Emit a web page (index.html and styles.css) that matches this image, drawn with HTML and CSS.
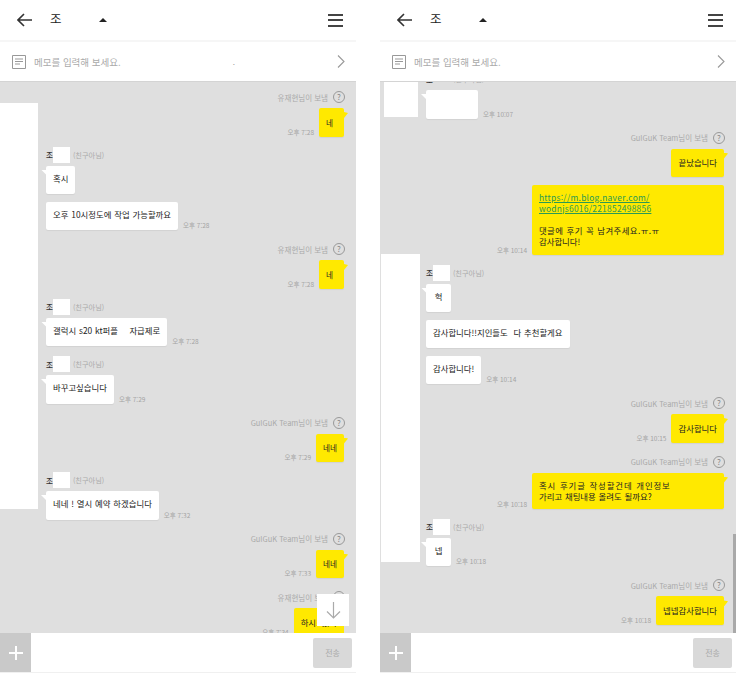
FILE: index.html
```html
<!DOCTYPE html>
<html lang="ko">
    <head>
        <meta charset="utf-8">
        <title>채팅</title>
        <link rel="stylesheet" href="styles.css">
    </head>
    <body>
        <div class="phone">
            <div class="header">
                <svg class="back" width="15" height="14" viewBox="0 0 15 14"><path d="M7 1 1 7l6 6M1 7h14"/></svg>
                <span class="title">조</span>
                <span class="caret"></span>
                <div class="burger"><i></i><i></i><i></i></div>
            </div>
            <div class="memo">
                <svg class="memo-icon" width="14" height="14" viewBox="0 0 14 14"><path d="M.5.5h13v13H.5zM3 4h8M3 6.5h8M3 9h5"/></svg>
                <span class="memo-text">메모를 입력해 보세요.</span>
                <span class="memo-dot">.</span>
                <svg class="chevron" width="8" height="13" viewBox="0 0 8 13"><path d="m1 .5 6 6-6 6"/></svg>
            </div>
            <div class="chat">
                <div class="sender">유재현님이 보냄 <span class="help">?</span></div>
                <div class="row out"><span class="time">오후 7:28</span><div class="bubble tail short">네</div></div>

                <div class="name">조<span class="mask"></span><em>(친구아님)</em></div>
                <div class="row"><div class="bubble tail">혹시</div></div>
                <div class="row next"><div class="bubble">오후 10시정도에 작업 가능할까요</div><span class="time">오후 7:28</span></div>

                <div class="sender">유재현님이 보냄 <span class="help">?</span></div>
                <div class="row out"><span class="time">오후 7:28</span><div class="bubble tail short">네</div></div>

                <div class="name">조<span class="mask"></span><em>(친구아님)</em></div>
                <div class="row"><div class="bubble tail">갤럭시 s20 kt퍼플&nbsp;&nbsp;&nbsp; 자급제로</div><span class="time">오후 7:28</span></div>

                <div class="name">조<span class="mask"></span><em>(친구아님)</em></div>
                <div class="row"><div class="bubble tail">바꾸고싶습니다</div><span class="time">오후 7:29</span></div>

                <div class="sender">GulGuK Team님이 보냄 <span class="help">?</span></div>
                <div class="row out"><span class="time">오후 7:29</span><div class="bubble tail short">네네</div></div>

                <div class="name">조<span class="mask"></span><em>(친구아님)</em></div>
                <div class="row"><div class="bubble tail">네네 ! 열시 예약 하겠습니다</div><span class="time">오후 7:32</span></div>

                <div class="sender">GulGuK Team님이 보냄 <span class="help">?</span></div>
                <div class="row out"><span class="time">오후 7:33</span><div class="bubble tail short">네네</div></div>

                <div class="sender">유재현님이 보냄 <span class="help">?</span></div>
                <div class="row out"><span class="time">오후 7:34</span><div class="bubble tail">하시! 있나</div></div>

                <div class="cover cover-left"></div>
                <div class="to-bottom">
                    <svg width="15" height="17" viewBox="0 0 15 17"><path d="M7.5 0v16M1 9.5l6.5 6.5L14 9.5"/></svg>
                </div>
            </div>
            <div class="input">
                <div class="plus"></div>
                <div class="send">전송</div>
            </div>
        </div>

        <div class="phone">
            <div class="header">
                <svg class="back" width="15" height="14" viewBox="0 0 15 14"><path d="M7 1 1 7l6 6M1 7h14"/></svg>
                <span class="title">조</span>
                <span class="caret"></span>
                <div class="burger"><i></i><i></i><i></i></div>
            </div>
            <div class="memo">
                <svg class="memo-icon" width="14" height="14" viewBox="0 0 14 14"><path d="M.5.5h13v13H.5zM3 4h8M3 6.5h8M3 9h5"/></svg>
                <span class="memo-text">메모를 입력해 보세요.</span>
                <svg class="chevron" width="8" height="13" viewBox="0 0 8 13"><path d="m1 .5 6 6-6 6"/></svg>
            </div>
            <div class="chat">
                <div class="name cut">조<em>(친구아님)</em></div>
                <div class="row"><div class="bubble tail blank"></div><span class="time">오후 10:07</span></div>

                <div class="sender">GulGuK Team님이 보냄 <span class="help">?</span></div>
                <div class="row out"><div class="bubble tail">끝났습니다</div></div>
                <div class="row out next">
                    <span class="time">오후 10:14</span>
                    <div class="bubble wide"><a href="#">https://m.blog.naver.com/<br>wodnjs6016/221852498856</a><br><br><span class="loose">댓글에 후기 꼭 남겨주세요.ㅠ.ㅠ</span><br>감사합니다!</div>
                </div>

                <div class="name">조<span class="mask"></span><em>(친구아님)</em></div>
                <div class="row"><div class="bubble tail">헉</div></div>
                <div class="row next"><div class="bubble">감사합니다!!지인들도&nbsp; 다 추천할게요</div></div>
                <div class="row next"><div class="bubble">감사합니다!</div><span class="time">오후 10:14</span></div>

                <div class="sender">GulGuK Team님이 보냄 <span class="help">?</span></div>
                <div class="row out"><span class="time">오후 10:15</span><div class="bubble tail">감사합니다</div></div>

                <div class="sender">GulGuK Team님이 보냄 <span class="help">?</span></div>
                <div class="row out">
                    <span class="time">오후 10:18</span>
                    <div class="bubble wide tail"><span class="spread">혹시 후기글 작성할건데 개인정보</span><br>가리고 채팅내용 올려도 될까요?</div>
                </div>

                <div class="name">조<span class="mask"></span><em>(친구아님)</em></div>
                <div class="row"><div class="bubble tail">넵</div><span class="time">오후 10:18</span></div>

                <div class="sender">GulGuK Team님이 보냄 <span class="help">?</span></div>
                <div class="row out"><span class="time">오후 10:18</span><div class="bubble tail">넵넵감사합니다</div></div>

                <div class="cover cover-top"></div>
                <div class="cover cover-mid"></div>
                <div class="scrollbar"></div>
            </div>
            <div class="input">
                <div class="plus"></div>
                <div class="send">전송</div>
            </div>
        </div>
    </body>
</html>
```

FILE: styles.css
```css
body {
    margin: 0;
    background-color: #fff;
    display: flex;
    gap: 24px;
    font-family: "Noto Sans CJK KR", "Noto Sans", sans-serif;
    color: #222;
}
.phone {
    width: 356px;
    height: 673px;
    display: flex;
    flex-direction: column;
}

/* top bars */
.header {
    height: 40px;
    display: flex;
    align-items: center;
    padding: 0 13px 0 17px;
    border-bottom: 2px solid #f6f6f6;
}
.back {
    fill: none;
    stroke: #333;
    stroke-width: 1.6;
}
.title {
    font-size: 12.5px;
    line-height: 14px;
    margin-left: 18px;
    margin-top: -3px;
}
.caret {
    width: 0;
    height: 0;
    margin-left: 37px;
    border-left: 4px solid transparent;
    border-right: 4px solid transparent;
    border-bottom: 4px solid #222;
}
.burger {
    margin-left: auto;
    width: 15px;
    height: 13px;
    display: flex;
    flex-direction: column;
    justify-content: space-between;
}
.burger i {
    height: 2px;
    background-color: #444;
}
.memo {
    height: 39px;
    display: flex;
    align-items: center;
    padding: 0 11px 0 12px;
    border-bottom: 1px solid #d4d4d4;
}
.memo-icon {
    fill: none;
    stroke: #999;
    stroke-width: 1;
}
.memo-text {
    font-size: 9.5px;
    color: #aaa;
    margin-left: 8px;
}
.memo-dot {
    font-size: 8px;
    color: #999;
    margin-left: 112px;
}
.chevron {
    margin-left: auto;
    fill: none;
    stroke: #999;
    stroke-width: 1.1;
}

/* messages */
.chat {
    flex: 1;
    min-height: 0;
    position: relative;
    overflow: hidden;
    background-color: #dfdfdf;
    padding: 8px 12px 0 46px;
}
.sender {
    height: 14px;
    margin-top: 12px;
    margin-right: -1px;
    display: flex;
    justify-content: flex-end;
    align-items: center;
    gap: 5px;
    font-size: 7.5px;
    color: #aaa;
}
.chat > .sender:first-child {
    margin-top: 0;
}
.help {
    width: 12px;
    height: 12px;
    box-sizing: border-box;
    border: 1px solid #999;
    border-radius: 50%;
    font-size: 8px;
    line-height: 10px;
    text-align: center;
    color: #888;
}
.name {
    height: 16px;
    margin-top: 10px;
    display: flex;
    align-items: center;
    font-size: 7.5px;
    font-weight: 500;
    color: #333;
}
.name em {
    font-style: normal;
    font-size: 7.2px;
    font-weight: 400;
    color: #aaa;
    margin-left: 3px;
}
.name.cut {
    margin-top: -19px;
}
.name.cut em {
    margin-left: 20px;
}
.mask {
    width: 17px;
    height: 16px;
    background-color: #fff;
}
.row {
    margin-top: 3px;
    display: flex;
    align-items: flex-end;
    gap: 5px;
}
.row.out {
    margin-top: 4px;
    justify-content: flex-end;
}
.row.next {
    margin-top: 7.5px;
}
.bubble {
    position: relative;
    box-sizing: border-box;
    min-width: 25px;
    min-height: 28.5px;
    padding: 7px;
    background-color: #fff;
    border-radius: 2px;
    box-shadow: 0 1px 1px rgba(0, 0, 0, 0.06);
    font-size: 8.4px;
    line-height: 11.2px;
    word-spacing: 0.5px;
    text-align: center;
    white-space: nowrap;
}
.out .bubble {
    padding: 8.6px 7px;
    background-color: #ffe900;
    text-align: left;
}
.out .bubble.short {
    font-size: 7.6px;
}
.out .bubble.wide {
    width: 192px;
    padding: 7px;
}
.bubble.tail::after {
    content: "";
    position: absolute;
    top: 4px;
    left: -5px;
    width: 5px;
    height: 5px;
    background-color: #fff;
    clip-path: polygon(0 0, 100% 0, 100% 100%);
}
.out .bubble.tail::after {
    left: auto;
    right: -4px;
    width: 4px;
    height: 6px;
    background-color: #ffe900;
    clip-path: polygon(0 0, 100% 15%, 0 100%);
}
.bubble.blank {
    width: 52px;
}
.bubble a {
    letter-spacing: 0.28px;
    color: #2a9a55;
}
.loose {
    letter-spacing: 0.4px;
}
.spread {
    letter-spacing: 0.9px;
}
.time {
    font-size: 6.5px;
    line-height: 9px;
    color: #a3a3a3;
    white-space: nowrap;
}

/* things lying over the messages */
.cover {
    position: absolute;
    background-color: #fff;
}
.cover-left {
    left: 0;
    top: 21px;
    width: 38px;
    height: 406px;
}
.cover-top {
    left: 4px;
    top: 0;
    width: 34px;
    height: 35px;
}
.cover-mid {
    left: 1px;
    top: 172px;
    width: 39px;
    height: 308px;
}
.to-bottom {
    position: absolute;
    left: 317px;
    top: 512px;
    width: 32px;
    height: 32px;
    background-color: #fff;
    display: flex;
    align-items: center;
    justify-content: center;
}
.to-bottom svg {
    fill: none;
    stroke: #aaa;
    stroke-width: 1.2;
}
.scrollbar {
    position: absolute;
    right: 0;
    bottom: 0;
    width: 3px;
    height: 99px;
    background-color: #a9a9a9;
}

/* input bar */
.input {
    height: 39px;
    display: flex;
    align-items: center;
    justify-content: space-between;
    padding-right: 4px;
    border-bottom: 1px solid #f0f0f0;
}
.plus {
    width: 31px;
    height: 39px;
    background-color: #c9c9c9;
    background-image: linear-gradient(#fff, #fff), linear-gradient(#fff, #fff);
    background-size: 14px 2px, 2px 14px;
    background-position: center;
    background-repeat: no-repeat;
}
.send {
    width: 39px;
    height: 30px;
    background-color: #d9d9d9;
    border-radius: 2px;
    font-size: 8px;
    line-height: 30px;
    text-align: center;
    color: #aaa;
}
```
